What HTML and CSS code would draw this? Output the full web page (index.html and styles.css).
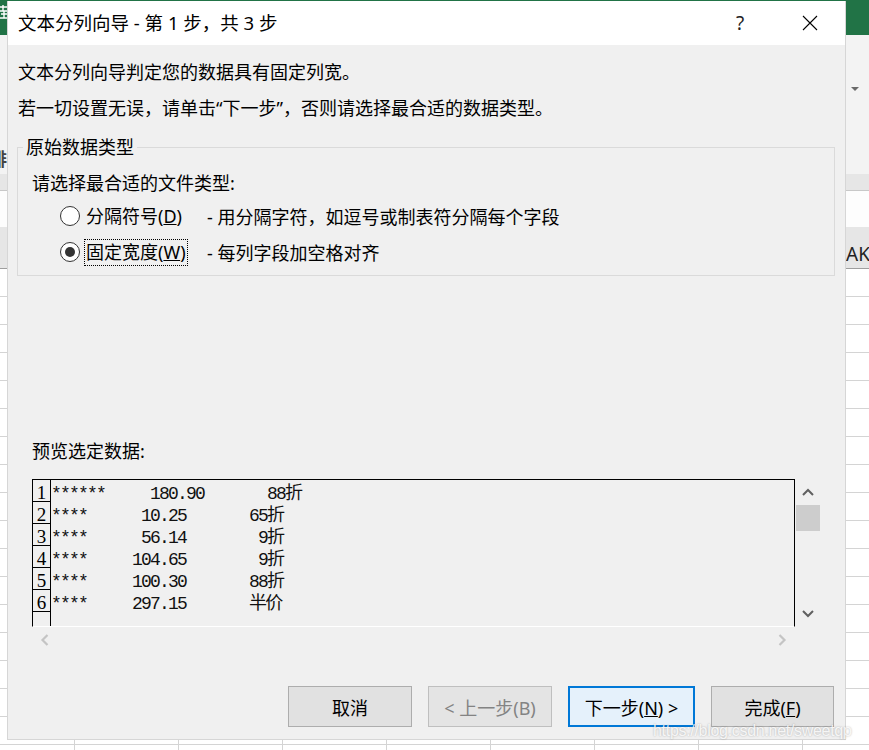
FILE: index.html
```html
<!DOCTYPE html>
<html lang="zh-CN">
<head>
    <meta charset="UTF-8">
    <meta name="viewport" content="width=device-width, initial-scale=1.0">
    <title>文本分列向导 - 第 1 步，共 3 步</title>
    <link rel="stylesheet" href="styles.css">
</head>
<body>
    <!-- Excel 工作表背景 -->
    <div class="excel">
        <div class="xl-tabs">
            <svg class="xl-icon" width="8" height="14" viewBox="0 0 8 14"><path d="M0 2H7M3 0V6M0 6H7M1 9H7M4 6V13M0 13H7" stroke="#fff" stroke-width="1.4" fill="none"/></svg>
        </div>
        <div class="xl-ribbon">
            <span class="xl-cut">排</span>
            <span class="xl-drop"></span>
        </div>
        <div class="xl-band"></div>
        <div class="xl-formula"></div>
        <div class="xl-head"><span class="xl-col">AK</span></div>
        <div class="xl-grid"></div>
    </div>

    <!-- 文本分列向导对话框 -->
    <div class="dialog">
        <div class="titlebar">
            <span class="title">文本分列向导 - 第 1 步，共 3 步</span>
            <div class="title-buttons">
                <span class="tb-btn help">?</span>
                <span class="tb-btn">
                    <svg width="16" height="16" viewBox="0 0 16 16"><path d="M1 1L15 15M15 1L1 15" stroke="#000" stroke-width="1.1" fill="none"/></svg>
                </span>
            </div>
        </div>

        <div class="intro">
            <p>文本分列向导判定您的数据具有固定列宽。</p>
            <p>若一切设置无误，请单击“下一步”，否则请选择最合适的数据类型。</p>
        </div>

        <fieldset class="group">
            <legend>原始数据类型</legend>
            <div class="prompt">请选择最合适的文件类型:</div>
            <div class="option">
                <span class="radio"></span>
                <span class="opt-name"><span class="opt-text">分隔符号(<u>D</u>)</span></span>
                <span class="opt-desc">- 用分隔字符，如逗号或制表符分隔每个字段</span>
            </div>
            <div class="option">
                <span class="radio checked"></span>
                <span class="opt-name"><span class="opt-text focus">固定宽度(<u>W</u>)</span></span>
                <span class="opt-desc">- 每列字段加空格对齐</span>
            </div>
        </fieldset>

        <div class="preview-label">预览选定数据:</div>

        <div class="preview">
            <div class="pv-data">
                <div class="pv-row"><span class="pv-num">1</span><span class="pv-cells">******     180.90       88折</span></div>
                <div class="pv-row"><span class="pv-num">2</span><span class="pv-cells">****      10.25       65折</span></div>
                <div class="pv-row"><span class="pv-num">3</span><span class="pv-cells">****      56.14        9折</span></div>
                <div class="pv-row"><span class="pv-num">4</span><span class="pv-cells">****     104.65        9折</span></div>
                <div class="pv-row"><span class="pv-num">5</span><span class="pv-cells">****     100.30       88折</span></div>
                <div class="pv-row"><span class="pv-num">6</span><span class="pv-cells">****     297.15       半价</span></div>
                <div class="pv-row"><span class="pv-num"></span><span class="pv-cells"></span></div>
            </div>
            <div class="pv-vscroll">
                <span class="arrow-box">
                    <svg width="12" height="8" viewBox="0 0 12 8"><path d="M1 7L6 2L11 7" stroke="#606060" stroke-width="2" fill="none"/></svg>
                </span>
                <span class="thumb"></span>
                <span class="spacer"></span>
                <span class="arrow-box">
                    <svg width="12" height="8" viewBox="0 0 12 8"><path d="M1 1L6 6L11 1" stroke="#606060" stroke-width="2" fill="none"/></svg>
                </span>
            </div>
            <div class="pv-hscroll">
                <span class="arrow-box">
                    <svg width="9" height="12" viewBox="0 0 9 12"><path d="M7.5 1L2.5 6L7.5 11" stroke="#c4c4c4" stroke-width="2.2" fill="none"/></svg>
                </span>
                <span class="arrow-box">
                    <svg width="9" height="12" viewBox="0 0 9 12"><path d="M1.5 1L6.5 6L1.5 11" stroke="#c4c4c4" stroke-width="2.2" fill="none"/></svg>
                </span>
            </div>
            <div></div>
        </div>

        <div class="buttons">
            <button>取消</button>
            <button disabled>&lt; 上一步(B)</button>
            <button class="default">下一步(<u>N</u>) &gt;</button>
            <button class="last">完成(<u>F</u>)</button>
        </div>
    </div>

    <div class="watermark">https://blog.csdn.net/sweetqp</div>
</body>
</html>
```

FILE: styles.css
```css
* {
    box-sizing: border-box;
}
body {
    margin: 0;
    width: 869px;
    height: 750px;
    overflow: hidden;
    position: relative;
    background: #fff;
    font-family: "Noto Sans", "Noto Sans CJK SC", sans-serif;
    color: #000;
}

/* Excel 背景 */
.excel {
    width: 869px;
    height: 750px;
}
.xl-tabs {
    height: 35px;
    background: #217346;
    overflow: hidden;
}
.xl-icon {
    display: block;
    margin: 5px 0 0 0;
}
.xl-ribbon {
    height: 139px;
    background: #f3f3f3;
    display: flex;
    align-items: flex-start;
    overflow: hidden;
}
.xl-cut {
    margin: 113px 0 0 -11px;
    font-size: 18px;
    line-height: 22px;
    color: #444;
    font-weight: bold;
}
.xl-drop {
    margin: 52px 10px 0 auto;
    border-left: 4px solid transparent;
    border-right: 4px solid transparent;
    border-top: 4px solid #6a6a6a;
}
.xl-band {
    height: 17px;
    background: #e6e6e6;
    border-bottom: 1px solid #c8c8c8;
}
.xl-formula {
    height: 36px;
    background: #fdfdfd;
}
.xl-head {
    height: 42px;
    background: #e6e6e6;
    border-bottom: 1px solid #9e9e9e;
    padding: 14px 0 0 846px;
    white-space: nowrap;
    overflow: hidden;
}
.xl-col {
    font-size: 19px;
    line-height: 26px;
    color: #222;
}
.xl-grid {
    height: 482px;
    background-image:
        linear-gradient(to bottom, transparent 27px, #d4d4d4 27px),
        linear-gradient(to right, transparent 74px, #d4d4d4 74px, #d4d4d4 75px, transparent 75px);
    background-size: 100% 28px, 104px 100%;
}

/* 对话框 */
.dialog {
    position: absolute;
    top: 1px;
    left: 7px;
    width: 839px;
    height: 739px;
    background: #f0f0f0;
    border: 1px solid #d6d6d6;
    border-top: none;
}
.titlebar {
    height: 44px;
    background: #fff;
    display: flex;
    align-items: center;
    padding-left: 10px;
}
.title {
    font-size: 18.5px;
    line-height: 24px;
}
.title-buttons {
    margin-left: auto;
    display: flex;
}
.tb-btn {
    width: 70px;
    height: 44px;
    display: flex;
    align-items: center;
    justify-content: center;
}
.help {
    font-size: 19px;
    color: #222;
}
.intro {
    padding: 9px 10px 0;
}
.intro p {
    margin: 0;
    font-size: 18px;
    line-height: 36px;
}
.group {
    margin: 9px 0 0 9px;
    width: 818px;
    padding: 0 0 5px 5px;
    border: 1px solid #dadada;
    min-inline-size: 0;
}
.group legend {
    padding: 0 3px;
    font-size: 18px;
    line-height: 24px;
}
.prompt {
    margin: 9px 0 0 9px;
    font-size: 18px;
    line-height: 30px;
}
.option {
    display: flex;
    align-items: center;
    height: 36px;
    font-size: 18px;
}
.radio {
    width: 20px;
    height: 20px;
    margin-left: 37px;
    border: 1px solid #333;
    border-radius: 50%;
    background: #fff;
    display: flex;
    align-items: center;
    justify-content: center;
}
.radio.checked::after {
    content: "";
    width: 10px;
    height: 10px;
    border-radius: 50%;
    background: #333;
}
.opt-name {
    width: 123px;
    margin-left: 4px;
}
.opt-text {
    display: inline-block;
    padding: 0 1px;
    border: 1px dotted transparent;
    line-height: 25px;
}
.opt-text.focus {
    border-color: #000;
}
.preview-label {
    margin: 160px 0 0 24px;
    font-size: 18px;
    line-height: 30px;
}

/* 数据预览 */
.preview {
    margin: 13px 0 0 24px;
    width: 788px;
    display: grid;
    grid-template-columns: 763px 25px;
    grid-template-rows: 148px 25px;
}
.pv-data {
    border: 1px solid #000;
    border-bottom-color: #fff;
    overflow: hidden;
}
.pv-row {
    display: flex;
    height: 22px;
}
.pv-num {
    width: 18px;
    height: 22px;
    flex: none;
    padding-top: 4px;
    border-right: 1px solid #000;
    border-bottom: 1px solid #000;
    text-align: center;
    font-family: "Liberation Serif", serif;
    font-size: 19px;
    line-height: 17px;
}
.pv-cells {
    padding-top: 6px;
    white-space: pre;
    font-family: "Liberation Mono", "Noto Sans CJK SC", monospace;
    font-size: 18px;
    letter-spacing: -1.8px;
    line-height: 16px;
    color: #111;
}
.pv-vscroll {
    display: flex;
    flex-direction: column;
}
.arrow-box {
    width: 25px;
    height: 26px;
    display: flex;
    align-items: center;
    justify-content: center;
}
.thumb {
    height: 26px;
    margin-left: 1px;
    background: #cdcdcd;
}
.spacer {
    flex: 1;
}
.pv-hscroll {
    display: flex;
    justify-content: space-between;
}

/* 按钮 */
.buttons {
    margin-top: 34px;
    padding-right: 11px;
    display: flex;
    justify-content: flex-end;
    gap: 16px;
}
button {
    width: 124px;
    height: 41px;
    background: #e1e1e1;
    border: 1px solid #adadad;
    font-family: inherit;
    font-size: 18px;
    color: #000;
    padding: 0;
}
button:disabled {
    color: #838383;
    border-color: #bfbfbf;
    background: #e4e4e4;
}
button.default {
    width: 127px;
    background: #e5f1fb;
    border: 2px solid #0078d7;
}
button.last {
    width: 123px;
}
.watermark {
    position: absolute;
    left: 653px;
    top: 719px;
    font-family: "Liberation Sans", sans-serif;
    font-size: 16px;
    letter-spacing: -0.3px;
    line-height: 24px;
    color: rgba(255, 255, 255, 0.85);
    text-shadow: 0 0 2px rgba(0, 0, 0, 0.3);
}
```
